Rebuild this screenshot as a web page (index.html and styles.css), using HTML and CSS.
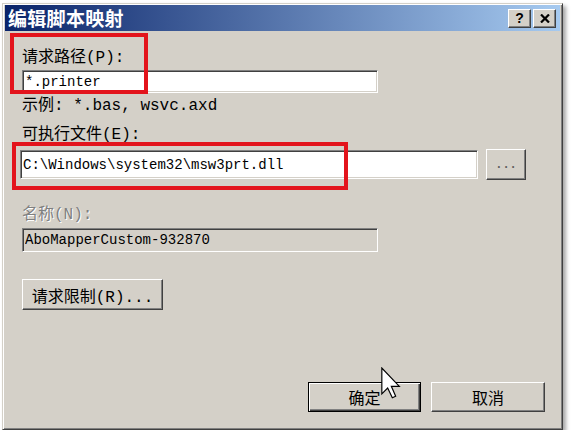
FILE: index.html
```html
<!DOCTYPE html>
<html lang="zh-CN">
<head>
    <meta charset="UTF-8">
    <title>编辑脚本映射</title>
    <link rel="stylesheet" href="styles.css">
</head>
<body>
    <div class="window">
        <div class="titlebar">
            <span class="title">编辑脚本映射</span>
            <div class="title-buttons">
                <button class="title-btn">?</button>
                <button class="title-btn">
                    <svg width="10" height="9" viewBox="0 0 10 9">
                        <path d="M1 0.5 L9 8.5 M9 0.5 L1 8.5" stroke="#000" stroke-width="2.2" fill="none"/>
                    </svg>
                </button>
            </div>
        </div>

        <div class="content">
            <label class="label label-path">请求路径(P):</label>
            <input class="field field-path" type="text" value="*.printer">
            <div class="hint">示例: *.bas, wsvc.axd</div>

            <label class="label label-exe">可执行文件(E):</label>
            <div class="exe-row">
                <input class="field field-exe" type="text" value="C:\Windows\system32\msw3prt.dll">
                <button class="btn btn-browse">...</button>
            </div>

            <label class="label label-name disabled">名称(N):</label>
            <input class="field field-name" type="text" value="AboMapperCustom-932870" disabled>

            <button class="btn btn-limits">请求限制(R)...</button>

            <div class="actions">
                <button class="btn btn-action btn-default">确定</button>
                <button class="btn btn-action">取消</button>
            </div>
        </div>

        <!-- red annotation boxes -->
        <div class="mark mark-path"></div>
        <div class="mark mark-exe"></div>

        <svg class="cursor" width="20" height="32" viewBox="0 0 12 19">
            <path d="M0.5 0.5 L0.5 16 L4 12.5 L6.8 18.3 L8.8 17.4 L6.2 11.5 L11 11.5 Z" fill="#fff" stroke="#000" stroke-width="0.7"/>
        </svg>
    </div>
</body>
</html>
```

FILE: styles.css
```css
* {
    box-sizing: border-box;
}

body {
    margin: 0;
    background-color: #ffffff;
    font-family: "Liberation Mono", "Noto Sans CJK SC", monospace;
    font-size: 16px;
    color: #000;
}

.window {
    position: relative;
    width: 561px;
    height: 427px;
    margin: 3px 0 0 2px;
    padding: 1px 2px 2px;
    background-color: #d4d0c8;
    border: 1px solid;
    border-color: #d4d0c8 #404040 #404040 #d4d0c8;
    box-shadow: inset 1px 1px #ffffff, inset -1px -1px #808080, 3px 3px 4px rgba(0, 0, 0, 0.35);
}

.titlebar {
    display: flex;
    align-items: center;
    justify-content: space-between;
    height: 26px;
    padding: 0 4px 0 3px;
    background: linear-gradient(to right, #0a246a, #a6caf0);
}

.title {
    color: #fff;
    font-family: "Noto Sans CJK SC", sans-serif;
    font-weight: bold;
    font-size: 19px;
    letter-spacing: 0.3px;
    line-height: 26px;
}

.title-buttons {
    display: flex;
    gap: 2px;
}

.title-btn {
    display: flex;
    align-items: center;
    justify-content: center;
    width: 23px;
    height: 19px;
    padding: 0;
    background-color: #d4d0c8;
    border: 1px solid;
    border-color: #ffffff #404040 #404040 #ffffff;
    box-shadow: inset -1px -1px #808080;
    font-family: "Liberation Sans", sans-serif;
    font-weight: bold;
    font-size: 14px;
    color: #000;
}

.content {
    display: flex;
    flex-direction: column;
    align-items: flex-start;
    padding-left: 17px;
}

.label,
.hint {
    display: block;
    line-height: 18px;
}

.label-path {
    margin-top: 18px;
}

.hint {
    margin-top: 4px;
}

.label-exe {
    margin-top: 11px;
}

.label-name {
    margin-top: 26px;
}

.disabled {
    color: #808080;
    text-shadow: 1px 1px #ffffff;
}

.field {
    margin: 0;
    padding: 0 2px;
    font-family: "Liberation Mono", monospace;
    font-size: 14px;
    color: #000;
    background-color: #ffffff;
    border: 1px solid;
    border-color: #808080 #ffffff #ffffff #808080;
    box-shadow: inset 1px 1px #404040, inset -1px -1px #d4d0c8;
    outline: none;
}

.field-path {
    width: 356px;
    height: 23px;
    margin-top: 3px;
}

.exe-row {
    display: flex;
    align-items: center;
    gap: 8px;
    margin: 5px 0 0 -2px;
}

.field-exe {
    width: 458px;
    height: 29px;
}

.field-name {
    width: 356px;
    height: 24px;
    margin-top: 4px;
    background-color: #d4d0c8;
    -webkit-text-fill-color: #000;
}

.btn {
    margin: 0;
    padding: 0;
    background-color: #d4d0c8;
    border: 1px solid;
    border-color: #ffffff #404040 #404040 #ffffff;
    box-shadow: inset -1px -1px #808080;
    font-family: "Liberation Mono", "Noto Sans CJK SC", monospace;
    font-size: 16px;
    color: #000;
}

.btn-browse {
    width: 40px;
    height: 31px;
    font-size: 12px;
    font-weight: bold;
    color: #606060;
}

.btn-limits {
    width: 141px;
    height: 31px;
    margin-top: 27px;
}

.actions {
    display: flex;
    align-self: stretch;
    justify-content: flex-end;
    gap: 10px;
    margin-top: 72px;
    padding-right: 15px;
}

.btn-action {
    width: 114px;
    height: 30px;
    font-family: "Noto Sans CJK SC", sans-serif;
}

.btn-default {
    width: 113px;
    border-color: #000;
    box-shadow: inset 1px 1px #ffffff, inset -1px -1px #404040, inset -2px -2px #808080;
}

.mark {
    position: absolute;
    border: 4px solid #e3141c;
}

.mark-path {
    left: 7px;
    top: 29px;
    width: 138px;
    height: 61px;
}

.mark-exe {
    left: 9px;
    top: 138px;
    width: 336px;
    height: 48px;
}

.cursor {
    position: absolute;
    left: 378px;
    top: 363px;
}
```
